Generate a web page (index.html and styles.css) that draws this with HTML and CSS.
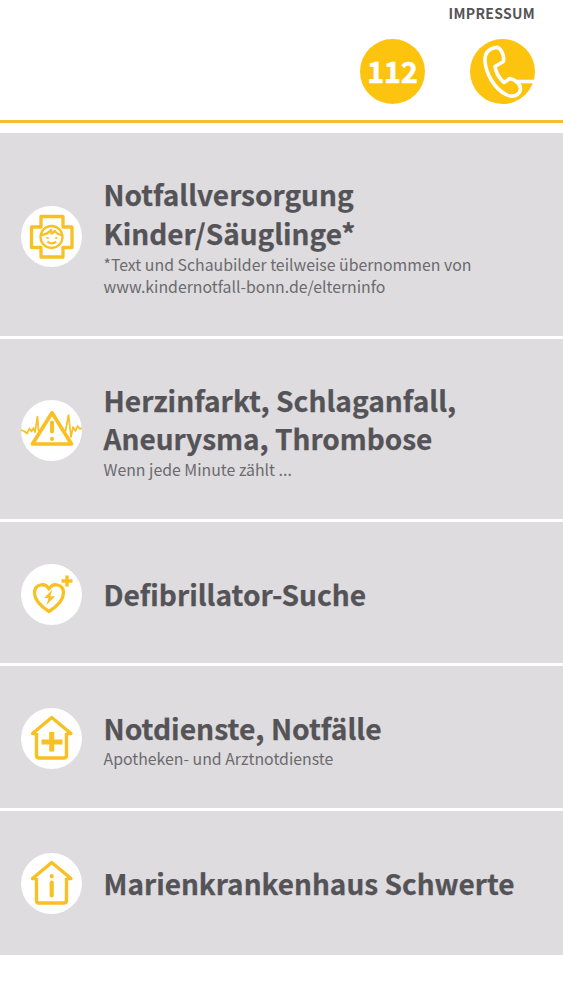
FILE: index.html
```html
<!DOCTYPE html>
<html lang="de">
<head>
<meta charset="utf-8">
<title>Notfall</title>
<link rel="stylesheet" href="styles.css">
</head>
<body>
<header class="header">
  <a class="imprint">IMPRESSUM</a>
  <div class="actions">
    <a class="call"><span class="number">112</span></a>
    <a class="call" aria-label="Telefon">
      <svg viewBox="0 0 65 65" fill="none" stroke="#fff" stroke-width="3.6" stroke-linejoin="round">
        <path d="M25.500 8.500C18 10 14.500 14 15 22C15.800 34 24 49.500 36 55.500C43 59 49.500 56.500 50.500 50C51 46 45.500 40.500 40 39.500L34 43.500C29.500 39.500 26 34 25 27.500L33.500 22.500C34.500 17 31 7.500 25.500 8.500Z"/>
        <path d="M47 42.500H64"/>
      </svg>
    </a>
  </div>
</header>
<main class="menu">
  <a class="row row-children">
    <span class="icon"><svg viewBox="0 0 61 61">
      <path stroke-width="3.300" d="M20 10.500H42V21H51V41.500H42V51H20V41.500H10.500V21H20Z"/>
      <circle cx="30.500" cy="31" r="11" stroke-width="2.300"/>
      <path stroke-width="2.300" d="M20.500 29C24.500 28.500 28 26.500 30 24L30.500 27.500L34 25C35.500 27.500 38 29 41.500 29M26.500 35.500C29 38 33 38 35 35.500"/>
      <path stroke-width="2.300" d="M26.500 31V32.800M35.300 31V32.800"/>
    </svg></span>
    <span class="text"><span class="title">Notfallversorgung</span><span class="title">Kinder/Säuglinge*</span><span class="sub">*Text und Schaubilder teilweise übernommen von</span><span class="sub">www.kindernotfall-bonn.de/elterninfo</span></span>
  </a>
  <a class="row row-heart">
    <span class="icon"><svg viewBox="0 0 61 61">
      <path stroke-width="3.700" d="M31 12.800L50.500 44H11.500Z"/>
      <path stroke-width="4" stroke-linecap="round" d="M31 22.500V31.500M31 38.800V39"/>
      <path stroke-width="1.700" d="M0 30L3 31L6 33.500L8.500 28.500L10.500 31.500L12.500 28L14 32L16.500 16.500L17.500 31M44.500 31L47.500 15L50 37L52 27L54.500 31L56.500 26L59 29L61 28"/>
    </svg></span>
    <span class="text"><span class="title title-wide">Herzinfarkt, Schlaganfall,</span><span class="title">Aneurysma, Thrombose</span><span class="sub">Wenn jede Minute zählt ...</span></span>
  </a>
  <a class="row row-aed">
    <span class="icon"><svg viewBox="0 0 61 61">
      <path stroke-width="3.300" d="M28 47.500C21 43 13.500 36.500 13.500 29C13.500 20 24 18 28 25C32 18 42.500 20 42.500 29C42.500 36.500 35 43 28 47.500Z"/>
      <path stroke-width="3.400" d="M46 11.500V22.500M40.500 17H51.500"/>
      <path class="solid" d="M31.500 25.500L23 34H27.500L25.500 41L34 32.300H29.200Z"/>
    </svg></span>
    <span class="text"><span class="title title-wide">Defibrillator-Suche</span></span>
  </a>
  <a class="row row-service">
    <span class="icon"><svg viewBox="0 0 61 61">
      <path stroke-width="3.400" d="M15.500 25V47.500Q15.500 50 18 50H43Q45.500 50 45.500 47.500V25M15.500 25.500H11.500L30.700 9.500L50 25.500H45.500"/>
      <path stroke-width="5" d="M30.700 24V43.500M20.500 34H41.500"/>
    </svg></span>
    <span class="text"><span class="title title-wider">Notdienste, Notfälle</span><span class="sub">Apotheken- und Arztnotdienste</span></span>
  </a>
  <a class="row row-hospital">
    <span class="icon"><svg viewBox="0 0 61 61">
      <path stroke-width="3.400" d="M15.500 25V47.500Q15.500 50 18 50H43Q45.500 50 45.500 47.500V25M15.500 25.500H11.500L30.700 9.500L50 25.500H45.500"/>
      <path stroke-width="4.200" stroke-linecap="round" d="M30.700 29.500V42.500M30.700 23.200V23.300"/>
    </svg></span>
    <span class="text"><span class="title">Marienkrankenhaus Schwerte</span></span>
  </a>
</main>
</body>
</html>
```
FILE: styles.css
```css
* { box-sizing: border-box; }
body {
  margin: 0;
  background: #fff;
  color: #545357;
  font-family: "Noto Sans CJK SC", "Noto Sans", sans-serif;
}
.header {
  height: 123px;
  padding: 3px 28px 0 0;
  border-bottom: 3px solid #f3bd38;
  display: flex;
  flex-direction: column;
  align-items: flex-end;
}
.imprint {
  font-size: 14px;
  line-height: 20px;
  font-weight: 700;
  letter-spacing: 0.3px;
}
.actions { display: flex; gap: 45px; margin-top: 16px; }
.call {
  width: 65px;
  height: 65px;
  border-radius: 50%;
  background: #fdc40f;
  display: flex;
  align-items: center;
  justify-content: center;
}
.call svg { width: 65px; height: 65px; }
.number {
  color: #fff;
  font-size: 28.5px;
  line-height: 40px;
  padding-bottom: 1px;
  font-weight: 700;
  -webkit-text-stroke: 0.6px #fff;
}
.menu {
  margin-top: 10px;
  display: grid;
  grid-template-rows: 203px 180px 141px 142px 144px;
  gap: 3px;
}
.row {
  background: #dedcdf;
  padding-left: 21px;
  display: flex;
  align-items: center;
  gap: 21.5px;
}
.icon {
  width: 61px;
  height: 61px;
  margin-top: 3px;
  border-radius: 50%;
  background: #fff;
  flex: none;
}
.icon svg {
  display: block;
  width: 61px;
  height: 61px;
  fill: none;
  stroke: #f9c023;
  stroke-linejoin: round;
}
.icon .solid { fill: #f9c023; stroke: none; }
.text {
  display: flex;
  flex-direction: column;
  align-items: flex-start;
  padding-top: 2px;
  white-space: nowrap;
}
.row-children .text { padding-top: 4px; }
.row-aed .text { padding-top: 1px; }
.row-service .text { padding-top: 3px; }
.row-hospital .icon { margin-top: 0; }
.row-hospital .text { padding-top: 0; }
.title {
  font-size: 28px;
  line-height: 39px;
  font-weight: 700;
  -webkit-text-stroke: 0.25px #545357;
}
.title-wide { font-size: 28.15px; }
.title-wider { font-size: 28.25px; }
.sub { font-size: 15.85px; line-height: 22px; color: #6b6a6e; }
.title + .sub { padding-top: 1px; }
```
